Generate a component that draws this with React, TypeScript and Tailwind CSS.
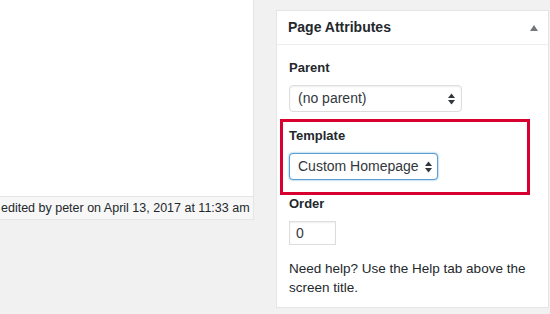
const font = { fontFamily: '"Liberation Sans", Arial, sans-serif' };

const UpDown = () => (
  <svg width="7" height="12" viewBox="0 0 7 12" className="shrink-0">
    <path d="M3.5 0.5 L7 5 H0 Z" fill="#32373c" />
    <path d="M3.5 11.5 L7 7 H0 Z" fill="#32373c" />
  </svg>
);

const Label = ({ children, className }: { children: React.ReactNode; className?: string }) => (
  <div className={"text-[13px] leading-[18px] font-bold text-[#23282d] " + (className ?? "")}>{children}</div>
);

export default function App() {
  return (
    <div className="w-[550px] h-[314px] bg-[#f1f1f1] flex overflow-hidden" style={font}>
      {/* editor column */}
      <div className="w-[254px] shrink-0 flex flex-col">
        <div className="h-[196px] bg-white border-r border-[#e5e5e5]" />
        <div className="h-[24px] bg-[#f7f7f7] border-t border-r border-b border-[#e5e5e5] flex items-center pl-[1px] whitespace-nowrap">
          <span className="text-[12.5px] text-[#23282d]">edited by peter on April 13, 2017 at 11:33 am</span>
        </div>
      </div>

      {/* Page Attributes box */}
      <div className="relative ml-[22px] mt-[10px] w-[273px] h-[298px] bg-white border border-[#e5e5e5] shrink-0">
        <div className="h-[34px] border-b border-[#eeeeee] flex items-center justify-between pl-[11px] pr-[10px]">
          <span className="text-[14px] font-bold text-[#23282d]">Page Attributes</span>
          <svg width="8" height="6" viewBox="0 0 8 6">
            <path d="M4 0 L8 6 H0 Z" fill="#72777c" />
          </svg>
        </div>

        <div className="px-[12px] flex flex-col">
          <Label className="mt-[14px]">Parent</Label>
          <div className="mt-[8px] w-[173px] h-[27px] border border-[#dddddd] rounded-[4px] bg-white flex items-center justify-between pl-[8px] pr-[6px] shadow-[inset_0_1px_2px_rgba(0,0,0,0.07)]">
            <span className="text-[14px] text-[#32373c]">(no parent)</span>
            <UpDown />
          </div>

          <Label className="mt-[15px]">Template</Label>
          <div className="mt-[8px] w-[149px] h-[27px] border border-[#5b9dd9] rounded-[4px] bg-white flex items-center justify-between pl-[8px] pr-[5px] shadow-[0_0_2px_rgba(30,140,190,0.8)]">
            <span className="text-[14px] text-[#32373c]">Custom Homepage</span>
            <UpDown />
          </div>

          <Label className="mt-[15px]">Order</Label>
          <div className="mt-[8px] w-[47px] h-[24px] border border-[#dddddd] bg-white flex items-center pl-[6px] shadow-[inset_0_1px_2px_rgba(0,0,0,0.07)]">
            <span className="text-[14px] text-[#32373c]">0</span>
          </div>

          <p className="mt-[14px] text-[13.5px] leading-[19px] text-[#23282d]">
            Need help? Use the Help tab above the screen title.
          </p>
        </div>

        {/* red highlight annotation */}
        <div className="absolute left-[3px] top-[108px] w-[250px] h-[76px] border-[3px] border-[#d8002f] pointer-events-none" />
      </div>
    </div>
  );
}
